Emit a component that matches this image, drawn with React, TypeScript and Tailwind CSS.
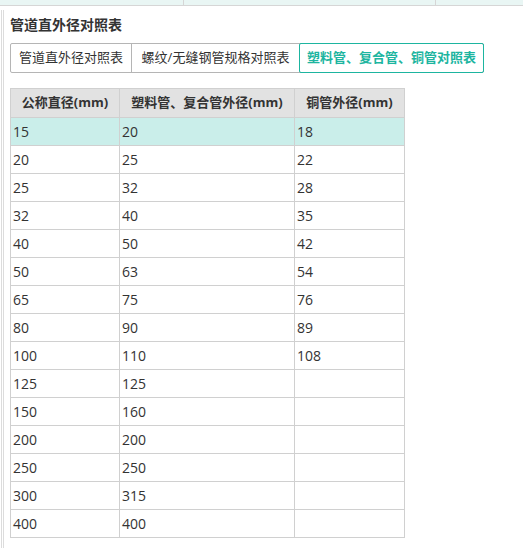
import React from 'react';

const rows: [string, string, string][] = [
  ['15', '20', '18'],
  ['20', '25', '22'],
  ['25', '32', '28'],
  ['32', '40', '35'],
  ['40', '50', '42'],
  ['50', '63', '54'],
  ['65', '75', '76'],
  ['80', '90', '89'],
  ['100', '110', '108'],
  ['125', '125', ''],
  ['150', '160', ''],
  ['200', '200', ''],
  ['250', '250', ''],
  ['300', '315', ''],
  ['400', '400', ''],
];

const tabs = ['管道直外径对照表', '螺纹/无缝钢管规格对照表', '塑料管、复合管、铜管对照表'];

export default function App() {
  const active = 2;
  return (
    <div
      className="min-h-[548px] bg-white text-[#333]"
      style={{ fontFamily: '"Open Sans", "Noto Sans CJK SC", sans-serif' }}
    >
      {/* top strip */}
      <div className="flex h-[6px] border-b border-[#d6d6d6] bg-[#e9f6f4]">
        <div className="w-[184px] border-r border-[#d6d6d6]" />
        <div className="w-[252px] border-r border-[#d6d6d6]" />
        <div className="flex-1" />
      </div>

      <div className="flex">
        {/* left double rule */}
        <div className="ml-[1px] mt-[4px] h-[538px] w-[3px] border-x border-[#dcdcdc]" />

        <div className="pl-[6px] pt-[10px]">
          <h2 className="h-[18px] text-[14px] font-bold leading-[18px] text-[#333]">管道直外径对照表</h2>

          <div className="mt-[9px] flex h-[30px] w-[474px] rounded-[2px] border border-[#b5b5b5]">
            {tabs.map((t, i) => (
              <div
                key={t}
                className={
                  i === active
                    ? '-my-px -mr-px flex flex-1 items-center justify-center rounded-[2px] border border-[#1db5a0] text-[13px] font-bold text-[#1db5a0]'
                    : i === 0
                      ? 'flex w-[121px] items-center justify-center border-r border-[#b5b5b5] text-[13px] text-[#333]'
                      : 'flex w-[167px] items-center justify-center text-[13px] text-[#333]'
                }
              >
                {t}
              </div>
            ))}
          </div>

          <table className="mt-[15px] w-[394px] table-fixed border-collapse text-[14px]">
            <colgroup>
              <col className="w-[109px]" />
              <col className="w-[175px]" />
              <col className="w-[110px]" />
            </colgroup>
            <thead>
              <tr className="h-[29px] bg-[#e2e2e2]">
                <th className="border border-[#d0d0d0] text-center text-[13px] font-bold">公称直径(mm)</th>
                <th className="border border-[#d0d0d0] text-center text-[13px] font-bold">塑料管、复合管外径(mm)</th>
                <th className="border border-[#d0d0d0] text-center text-[13px] font-bold">铜管外径(mm)</th>
              </tr>
            </thead>
            <tbody>
              {rows.map((r, i) => (
                <tr key={i} className={i === 0 ? 'h-[28px] bg-[#caeeea]' : 'h-[28px]'}>
                  {r.map((c, j) => (
                    <td key={j} className="border border-[#d0d0d0] pl-[2px] text-left">
                      {c}
                    </td>
                  ))}
                </tr>
              ))}
            </tbody>
          </table>
        </div>
      </div>
    </div>
  );
}
